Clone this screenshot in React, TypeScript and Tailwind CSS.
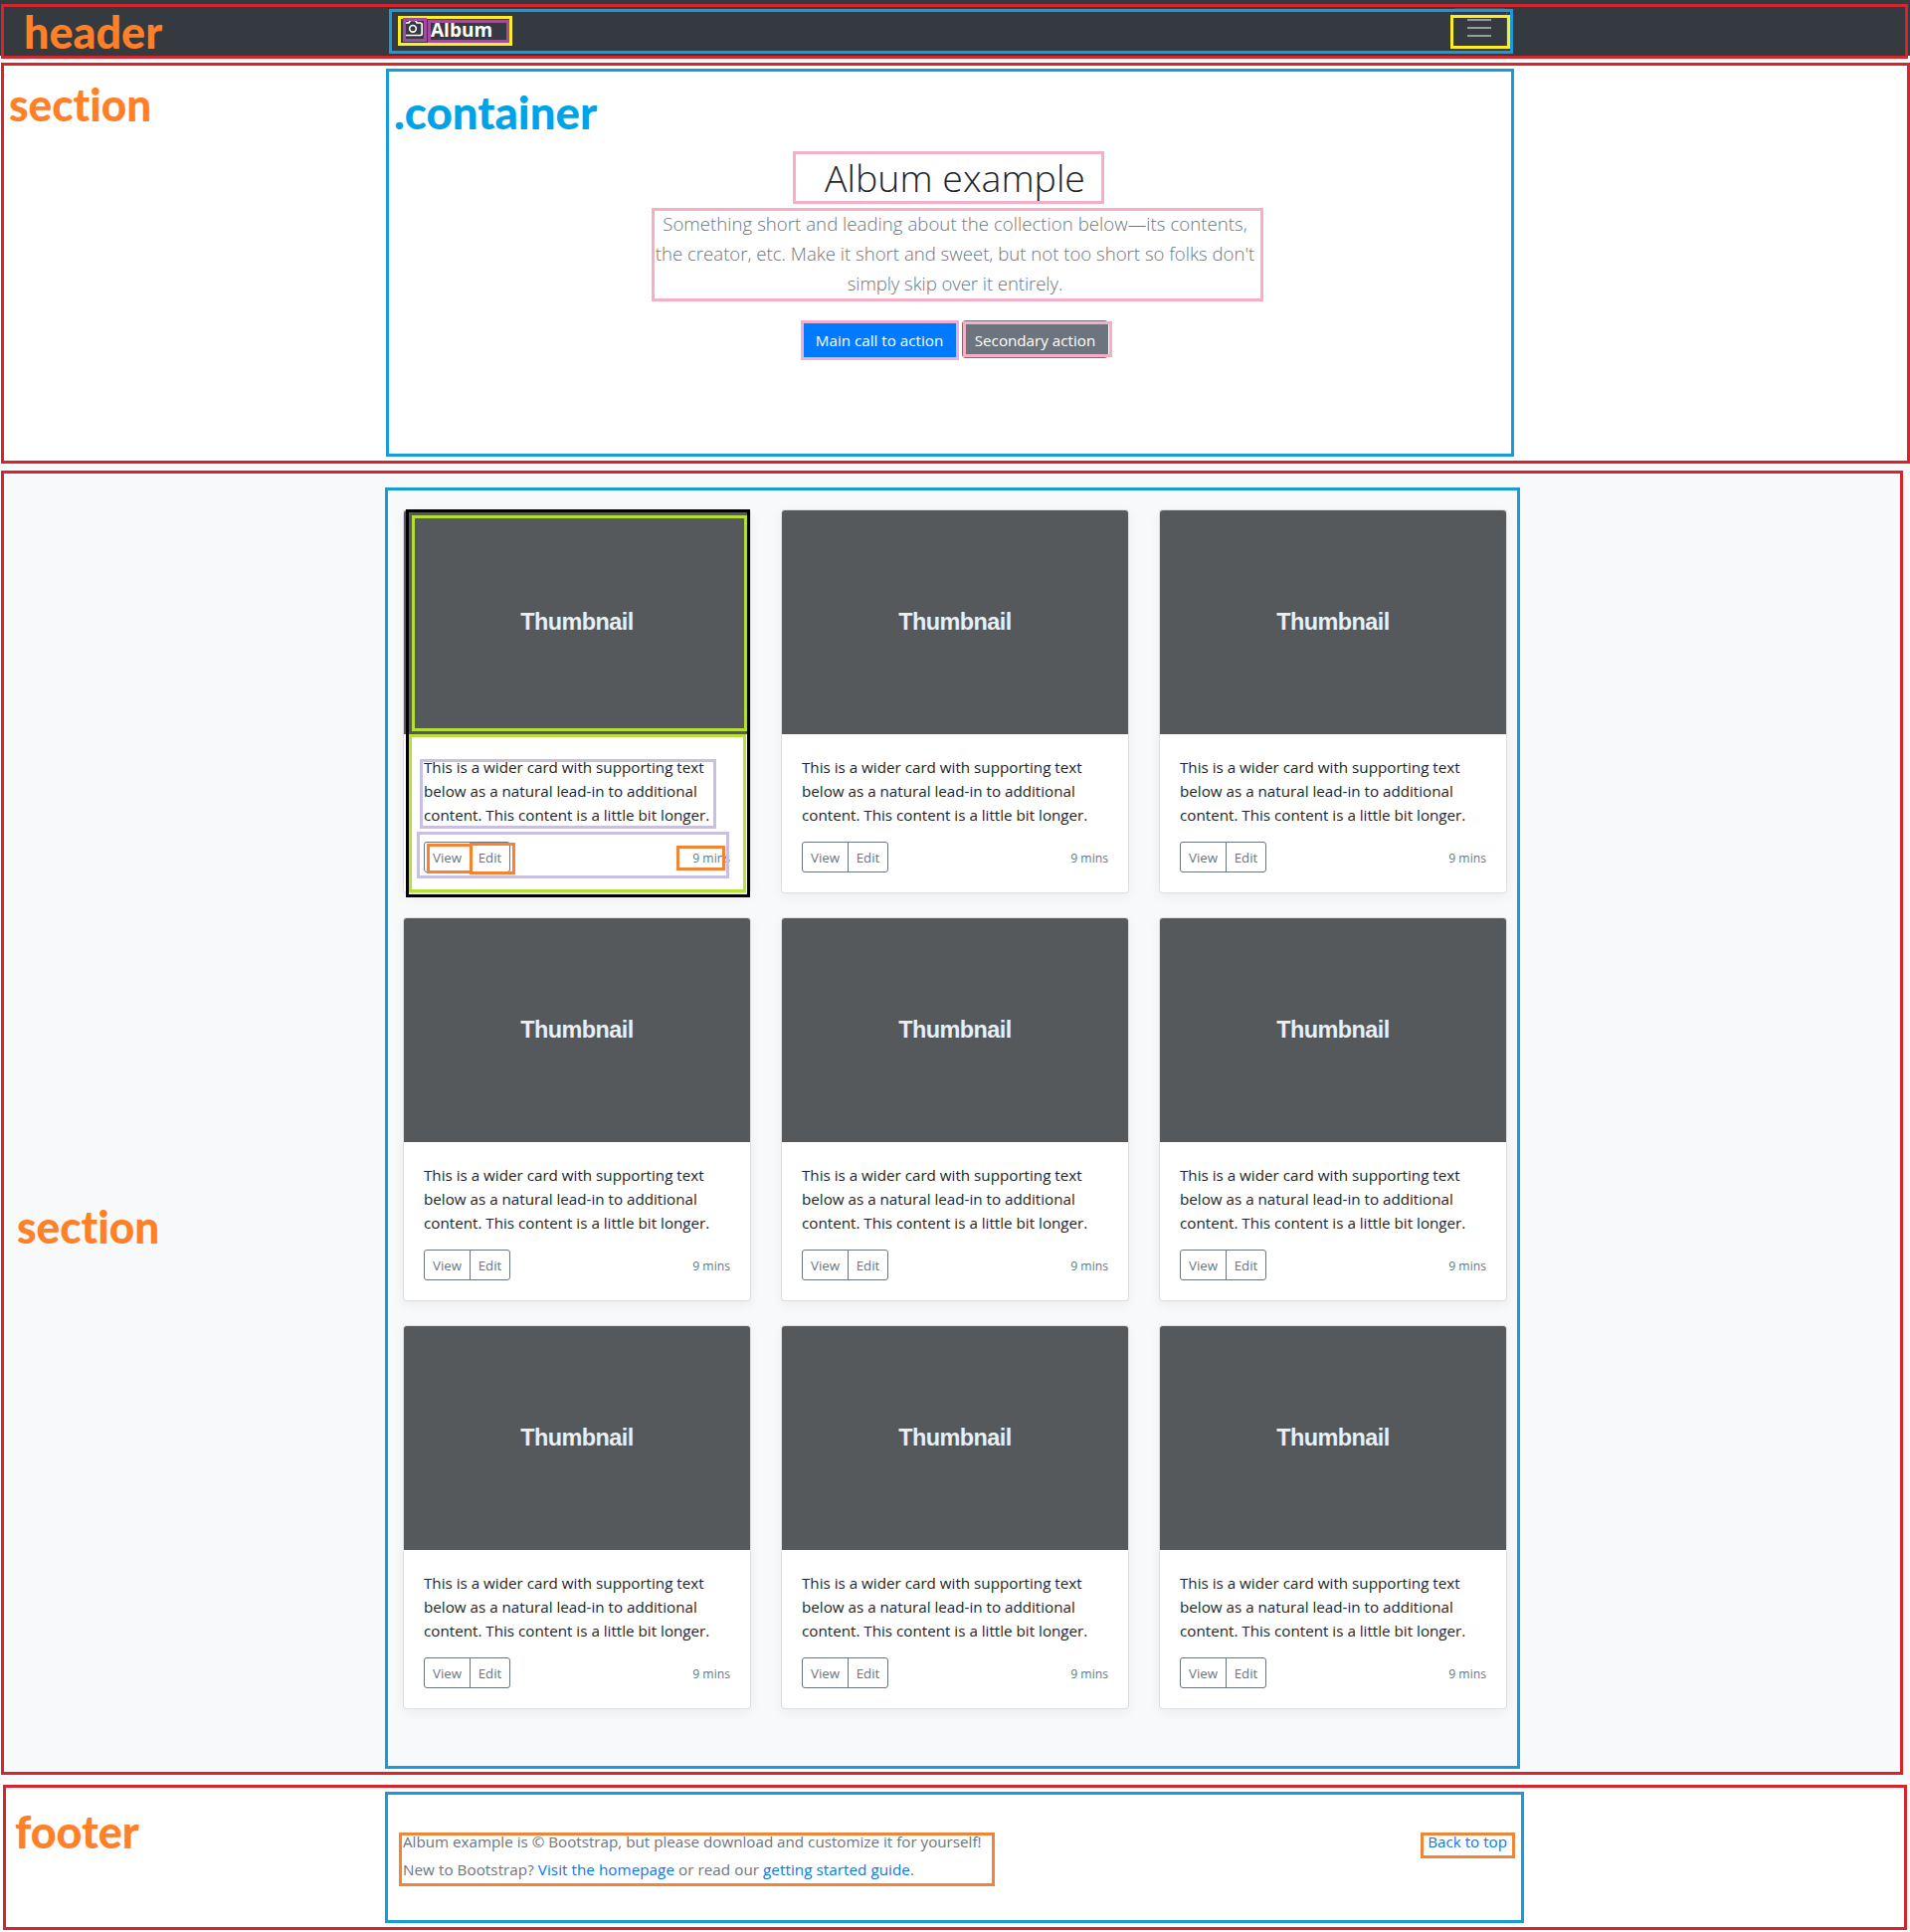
import type { ReactNode } from "react";
import { FiCamera } from "react-icons/fi";

/* Outlines drawn over the page to explain its structure. */
const OUTLINES: string[] = [
  // header
  "left-[1px] top-[4px] w-[1917px] h-[55px] border-[#d3272d]",
  "left-[391px] top-[9px] w-[1130px] h-[45px] border-[#169cdb]",
  "left-[400px] top-[16px] w-[115px] h-[30px] border-[#fdee21]",
  "left-[405px] top-[18px] w-[24px] h-[24px] border-[#a04c9f]",
  "left-[430px] top-[20px] w-[82px] h-[23px] border-[#a04c9f]",
  "left-[1458px] top-[15px] w-[60px] h-[34px] border-[#fdee21]",
  // intro section
  "left-[1px] top-[63px] w-[1919px] h-[403px] border-[#d8242b]",
  "left-[388px] top-[69px] w-[1134px] h-[390px] border-[#169cdb]",
  "left-[797px] top-[152px] w-[313px] h-[53px] border-[#f6aec6]",
  "left-[655px] top-[209px] w-[615px] h-[94px] border-[#f6aec6]",
  "left-[805px] top-[322px] w-[159px] h-[40px] border-[#f0afd0]",
  "left-[968px] top-[323px] w-[150px] h-[36px] border-[#f6aec6]",
  // album section
  "left-[1px] top-[473px] w-[1912px] h-[1311px] border-[#d8242b]",
  "left-[387px] top-[490px] w-[1141px] h-[1288px] border-[#169cdb]",
  // first card
  "left-[408px] top-[512px] w-[346px] h-[390px] border-black",
  "left-[414px] top-[518px] w-[337px] h-[217px] border-[#b5de35]",
  "left-[411px] top-[738px] w-[339px] h-[159px] border-[#b8e03a]",
  "left-[422px] top-[763px] w-[298px] h-[70px] border-[#c8bfe2]",
  "left-[419px] top-[836px] w-[314px] h-[47px] border-[#c8bfe2]",
  "left-[429px] top-[848px] w-[46px] h-[30px] border-[#f98232]",
  "left-[472px] top-[847px] w-[46px] h-[32px] border-[#f98232]",
  "left-[680px] top-[850px] w-[49px] h-[25px] border-[#f18437]",
  // footer
  "left-[3px] top-[1794px] w-[1914px] h-[146px] border-[#d3272d]",
  "left-[387px] top-[1801px] w-[1145px] h-[132px] border-[#169cdb]",
  "left-[401px] top-[1842px] w-[599px] h-[54px] border-[#f08437]",
  "left-[1428px] top-[1842px] w-[95px] h-[26px] border-[#f08437]",
];

const LABELS: { text: string; place: string }[] = [
  { text: "header", place: "left-[24px] top-[3px] scale-x-[0.965] text-[#ff8027]" },
  { text: "section", place: "left-[9px] top-[76px] scale-x-[0.95] text-[#ff8027]" },
  { text: ".container", place: "left-[396px] top-[84px] scale-x-[0.98] text-[#00a2e8]" },
  { text: "section", place: "left-[17px] top-[1204px] scale-x-[0.95] text-[#ff8027]" },
  { text: "footer", place: "left-[15px] top-[1812px] scale-x-[0.965] text-[#ff8027]" },
];

function Annotations() {
  return (
    <div className="pointer-events-none absolute inset-0 overflow-hidden">
      {OUTLINES.map((o) => (
        <div key={o} className={`absolute border-[3px] ${o}`} />
      ))}
      {LABELS.map((l) => (
        <span
          key={l.place}
          className={`absolute origin-left whitespace-nowrap font-['Lato'] text-[46.5px] leading-[56px] font-black [font-variant-ligatures:none] ${l.place}`}
        >
          {l.text}
        </span>
      ))}
    </div>
  );
}

function Container({ children, className = "" }: { children: ReactNode; className?: string }) {
  return <div className={`mx-auto w-[1140px] px-[15px] ${className}`}>{children}</div>;
}

function Header() {
  return (
    <header className="h-14 bg-[#343a40] py-2">
      <Container className="flex items-center justify-between">
        <a className="flex items-center text-white">
          <FiCamera className="mr-2 size-5" strokeWidth={2} />
          <strong className="pt-[5px] text-[19px] leading-[27px] font-bold">Album</strong>
        </a>
        <button className="flex h-10 w-14 items-center justify-center rounded border border-white/10">
          <svg viewBox="0 0 30 30" className="size-[30px]" fill="none" stroke="rgba(255,255,255,.5)" strokeWidth={2} strokeLinecap="square">
            <path d="M4 7h22M4 15h22M4 23h22" />
          </svg>
        </button>
      </Container>
    </header>
  );
}

function Intro() {
  return (
    <section className="h-[408px] bg-white pt-24 text-center">
      <h1 className="h-14 pt-[3px] text-[37.5px] leading-[48px] font-light text-[#212529]">Album example</h1>
      <p className="pt-[2px] text-[18.6px] leading-[30px] font-light text-[#6c757d]">
        <span className="block tracking-[0.04px]">Something short and leading about the collection below—its contents,</span>
        <span className="block">the creator, etc. Make it short and sweet, but not too short so folks don't</span>
        <span className="block tracking-[-0.08px]">simply skip over it entirely.</span>
      </p>
      <div className="mt-[22px] flex justify-center gap-[5px] text-[15.2px] leading-6 text-white">
        <a className="h-[38px] w-[156px] rounded bg-[#007bff] pt-2">Main call to action</a>
        <a className="h-[38px] w-[147px] rounded bg-[#6c757d] pt-2">Secondary action</a>
      </div>
    </section>
  );
}

function Card() {
  return (
    <article className="h-[386px] overflow-hidden rounded border border-black/[.125] bg-white bg-clip-border shadow-[0_4px_12px_rgba(0,0,0,0.05)]">
      <div className="flex h-[225px] items-center justify-center bg-[#55595c] pt-px font-['Liberation_Sans'] text-[23.4px] leading-none font-bold tracking-[-0.5px] text-[#eceeef]">
        Thumbnail
      </div>
      <div className="px-5 pt-[21px]">
        <p className="mb-[15px] text-[15.2px] leading-6 whitespace-nowrap text-[#212529]">
          This is a wider card with supporting text
          <br />
          below as a natural lead-in to additional
          <br />
          content. This content is a little bit longer.
        </p>
        <div className="flex items-center justify-between text-[#6c757d]">
          <div className="flex h-[31px] text-[13.3px] leading-[29px]">
            <button className="w-[47px] rounded-l-[3px] border border-[#6c757d] pt-px">View</button>
            <button className="-ml-px w-[41px] rounded-r-[3px] border border-[#6c757d] pt-px">Edit</button>
          </div>
          <small className="pt-[2px] text-[12.2px] leading-[19px]">9 mins</small>
        </div>
      </div>
    </article>
  );
}

function Album() {
  return (
    <section className="h-[1326px] bg-[#f8f9fa] pt-12">
      <Container className="grid grid-cols-3 gap-x-[30px] gap-y-6">
        {Array.from({ length: 9 }, (_, i) => (
          <Card key={i} />
        ))}
      </Container>
    </section>
  );
}

function Footer() {
  return (
    <footer className="h-[152px] bg-white pt-[49px] text-[15.2px] leading-6 text-[#6c757d]">
      <Container className="flex items-start justify-between">
        <div>
          <p className="mb-1">Album example is © Bootstrap, but please download and customize it for yourself!</p>
          <p className="tracking-[0.06px]">
            New to Bootstrap? <a className="text-[#0878e8]">Visit the homepage</a> or read our{" "}
            <a className="text-[#0878e8]">getting started guide</a>.
          </p>
        </div>
        <a className="text-[#0878e8]">Back to top</a>
      </Container>
    </footer>
  );
}

export default function App() {
  return (
    <div className="relative h-[1942px] w-[1920px] overflow-hidden bg-white font-['Open_Sans',sans-serif]">
      <Header />
      <main>
        <Intro />
        <Album />
      </main>
      <Footer />
      <Annotations />
    </div>
  );
}
